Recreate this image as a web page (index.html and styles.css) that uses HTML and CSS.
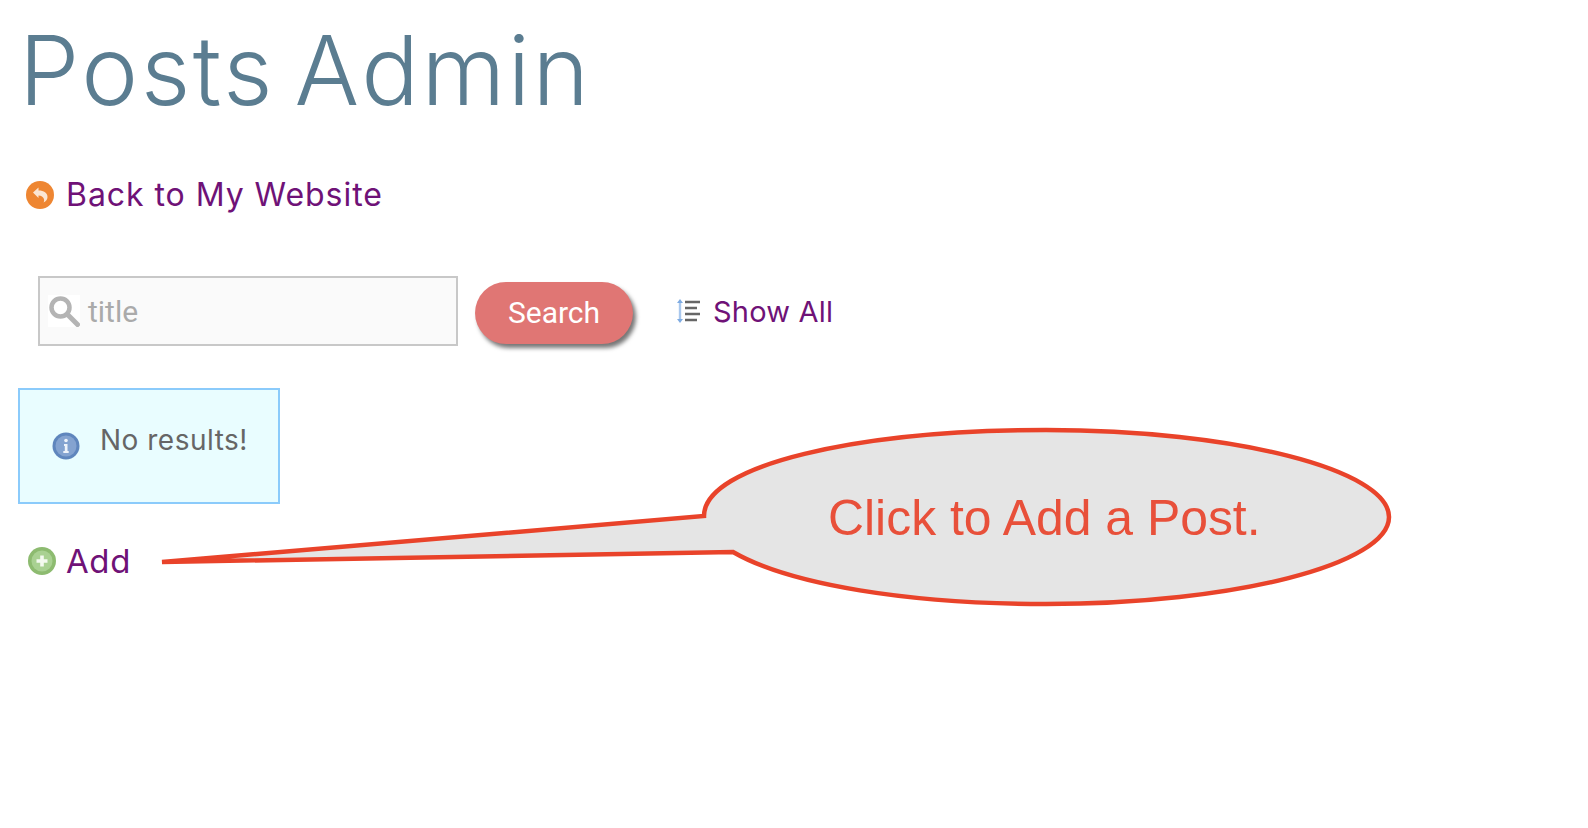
FILE: index.html
```html
<!DOCTYPE html>
<html lang="en">
<head>
    <meta charset="UTF-8">
    <title>Posts Admin</title>
    <link rel="stylesheet" href="styles.css">
</head>
<body>
    <main class="admin-page">
        <h1 class="page-title">Posts Admin</h1>

        <a class="link back-link" href="#">
            <svg class="icon" viewBox="0 0 28 28" width="28" height="28">
                <circle cx="14" cy="14" r="14" fill="#ee8632"/>
                <path d="M7 11.5 L12.5 6.5 V9.5 C18 9.5 21.5 12 21.5 16 C21.5 18.5 20 20.5 17.5 21.5 C18.8 19.5 18.5 15 12.5 14.5 V17 Z" fill="#fbe6d3"/>
            </svg>
            Back to My Website
        </a>

        <!--Search Row-->
        <form class="search-row">
            <div class="search-field">
                <svg class="search-icon" viewBox="0 0 32 32" width="32" height="32">
                    <rect width="32" height="32" fill="#fff"/>
                    <circle cx="12.5" cy="12.5" r="9" fill="none" stroke="#b4b4b4" stroke-width="4.5"/>
                    <path d="M19.5 19.5 L29.5 29.5" stroke="#b4b4b4" stroke-width="5" stroke-linecap="round"/>
                </svg>
                <span class="search-placeholder">title</span>
            </div>
            <button class="search-button" type="button">Search</button>
            <a class="link show-all" href="#">
                <svg class="icon" viewBox="0 0 26 26" width="26" height="26">
                    <path d="M4 4 V22" stroke="#a9c8ee" stroke-width="2.4"/>
                    <path d="M1 5 L4 1 L7 5 Z M1 21 L4 25 L7 21 Z" fill="#7eabe2"/>
                    <path d="M9 4 H24 M9 10 H21 M9 16 H24 M9 22 H21" stroke="#666" stroke-width="2.4"/>
                </svg>
                Show All
            </a>
        </form>

        <!--Message Box-->
        <div class="info-box">
            <svg class="info-icon" viewBox="0 0 28 28" width="28" height="28">
                <circle cx="14" cy="14" r="13.5" fill="#5f86bd"/>
                <circle cx="14" cy="14" r="10.5" fill="#84a3d0"/>
                <circle cx="14" cy="8.5" r="1.8" fill="#eef3fa"/>
                <path d="M12 12 H15.5 V19 H16.7 V21 H11.3 V19 H12.8 V14 H12 Z" fill="#eef3fa"/>
            </svg>
            <span class="info-text">No results!</span>
        </div>

        <a class="link add-link" href="#">
            <svg class="icon" viewBox="0 0 28 28" width="28" height="28">
                <circle cx="14" cy="14" r="14" fill="#8dbb70"/>
                <circle cx="14" cy="14" r="10.5" fill="#a9d192"/>
                <path d="M14 8.5 V19.5 M8.5 14 H19.5" stroke="#f4faf0" stroke-width="3.6"/>
            </svg>
            Add
        </a>

        <!--Callout over the page-->
        <svg class="callout" viewBox="0 0 1588 828" width="1588" height="828">
            <path d="M704 516 C704 465 858 430 1046 430 C1235 430 1389 470 1389 517 C1389 564 1235 604 1046 604 C910 604 790 585 733 552 L162 562 Z" fill="#e5e5e5" stroke="#e9432a" stroke-width="4.5"/>
            <text class="callout-text" x="828" y="535">Click to Add a Post.</text>
        </svg>
    </main>
</body>
</html>
```

FILE: styles.css
```css
body {
    margin: 0;
    background-color: #fff;
    font-family: 'Inter', sans-serif;
}
.admin-page {
    padding: 10px 18px 0;
}
.page-title {
    margin: 0;
    font-size: 96px;
    line-height: 120px;
    font-weight: 350;
    letter-spacing: 2.5px;
    word-spacing: -10px;
    color: #5b7d91;
    padding-left: 1px;
}
.link {
    display: flex;
    align-items: center;
    color: #6f1277;
    text-decoration: none;
    font-weight: 400;
}
.icon {
    flex: none;
}
.back-link {
    margin: 45px 0 0 8px;
    gap: 12px;
    font-size: 32px;
    line-height: 40px;
    letter-spacing: 0.95px;
}
.search-row {
    display: flex;
    align-items: center;
    margin: 61px 0 0 20px;
}
.search-field {
    display: flex;
    align-items: center;
    gap: 8px;
    box-sizing: border-box;
    width: 420px;
    height: 70px;
    padding-left: 8px;
    background-color: #fafafa;
    border: 2px solid #c8c8c8;
}
.search-placeholder {
    font-family: 'Roboto', sans-serif;
    font-size: 30px;
    color: #aaa;
}
.search-button {
    width: 158px;
    height: 62px;
    margin: 3px 0 0 17px;
    border: none;
    border-radius: 31px;
    background-color: #e07674;
    box-shadow: 3px 4px 4px #777;
    color: #fff;
    font-family: 'Roboto', sans-serif;
    font-size: 30px;
}
.show-all {
    margin: 0 0 0 43px;
    gap: 11px;
    font-size: 29px;
    letter-spacing: 0.2px;
}
.info-box {
    display: flex;
    align-items: flex-start;
    box-sizing: border-box;
    width: 262px;
    height: 116px;
    margin-top: 42px;
    padding: 42px 0 0 32px;
    background-color: #e9fdff;
    border: 2px solid #8bcbfb;
}
.info-text {
    margin: -10px 0 0 20px;
    font-size: 28px;
    line-height: 36px;
    letter-spacing: 0.5px;
    color: #666;
}
.add-link {
    margin: 37px 0 0 10px;
    gap: 10px;
    font-size: 33px;
    line-height: 40px;
    letter-spacing: 0.6px;
}
.callout {
    position: absolute;
    left: 0;
    top: 0;
    pointer-events: none;
}
.callout-text {
    font-family: 'Liberation Sans', sans-serif;
    font-size: 49.9px;
    fill: #e8503a;
}
```
